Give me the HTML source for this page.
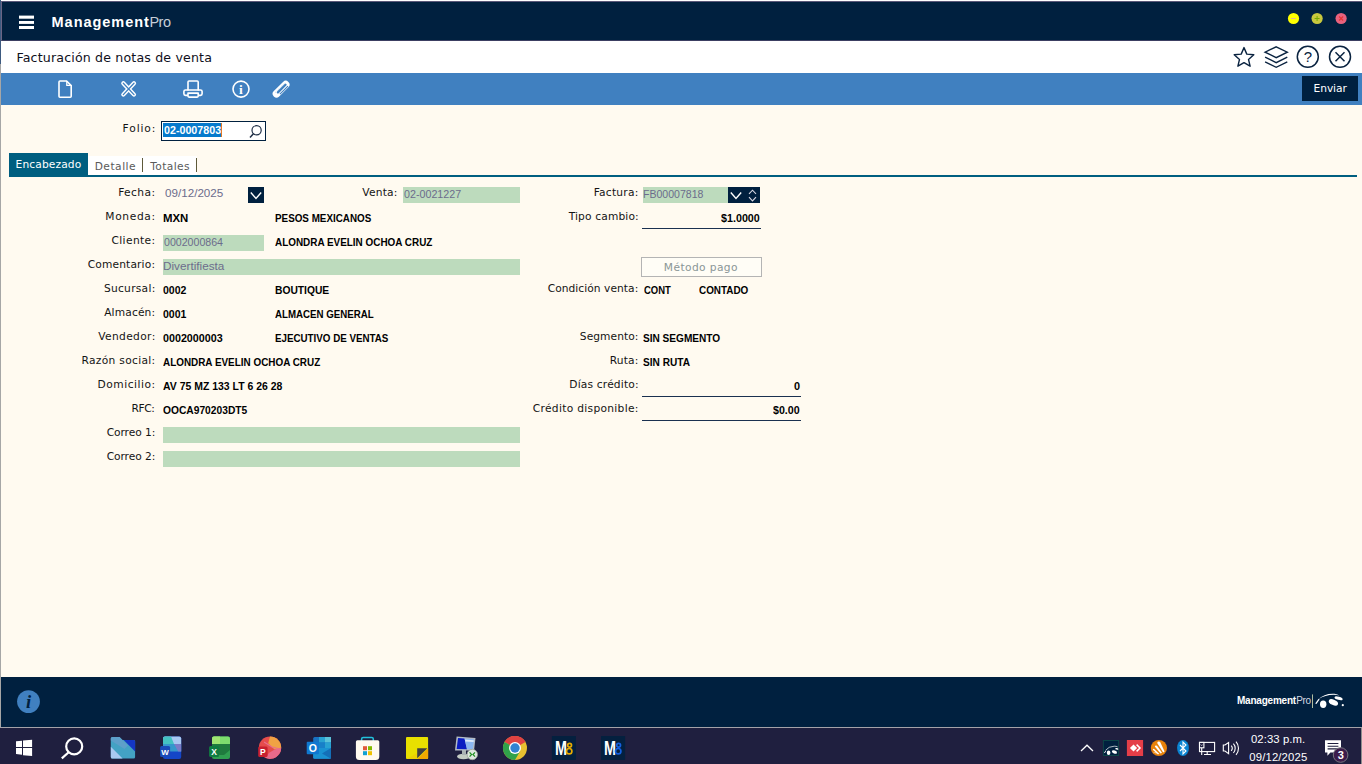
<!DOCTYPE html>
<html lang="es">
<head>
<meta charset="utf-8">
<title>ManagementPro - Facturación de notas de venta</title>
<style>
html,body{margin:0;padding:0}
body{width:1362px;height:764px;overflow:hidden;position:relative;background:#fffaf0;font-family:"Liberation Sans",sans-serif}
.abs,.t,svg.ov{position:absolute}
.t{white-space:pre;line-height:1;display:block;transform-origin:0 50%}
.lbl{font:10.67px/1 "DejaVu Sans",sans-serif;color:#141414}
.val{font:bold 10.9px/1 "Liberation Sans",sans-serif;color:#000}
.fld{font:10.9px/1 "Liberation Sans",sans-serif;color:#6c6c8c}
.brandb{font:bold 14.5px/1 "Liberation Sans",sans-serif;color:#fff}
.brandl{font:14.5px/1 "Liberation Sans",sans-serif;color:#c6ced8}
.title{font:12.6px/1 "DejaVu Sans",sans-serif;color:#10101c}
.btn{font:10.67px/1 "DejaVu Sans",sans-serif;color:#fff}
.sel{font:bold 10.9px/1 "Liberation Sans",sans-serif;color:#fff}
.tabon{font:10.67px/1 "DejaVu Sans",sans-serif;color:#fff}
.tab{font:10.67px/1 "DejaVu Sans",sans-serif;color:#5a5a5a}
.mp{font:10.67px/1 "DejaVu Sans",sans-serif;color:#8a9696}
.clock{font:11.3px/1 "Liberation Sans",sans-serif;color:#fff}
.footb{font:bold 10px/1 "Liberation Sans",sans-serif;color:#fff}
.footl{font:10px/1 "Liberation Sans",sans-serif;color:#d4dbe3}
#edge0{left:0;top:0;width:1px;height:64px;background:#3d5a80}
#edge1{left:0;top:64px;width:1px;height:664px;background:#a6a6a6}
#topline{left:1px;top:0;width:1361px;height:1px;background:#fff}
#header{left:1px;top:1px;width:1361px;height:40px;background:#00203f;box-sizing:border-box;border-left:1px solid #6b6585;border-top:1px solid #5a5878;border-bottom:1px solid #3c3f62}
#titlebar{left:1px;top:41px;width:1361px;height:32px;background:#fff}
#toolbar{left:1px;top:73px;width:1361px;height:32px;background:#4080c0}
#send{left:1302px;top:76px;width:56px;height:25px;background:#00203f}
#content{left:1px;top:105px;width:1361px;height:572px;background:#fffaf0}
#folio{left:161px;top:121px;width:105px;height:20px;box-sizing:border-box;border:1px solid #00203f;background:#fff}
#folsel{left:163px;top:123px;width:58px;height:14px;background:#067acc}
#caret{left:221px;top:123px;width:1px;height:14px;background:#e07828}
#tabwhite{left:88px;top:156px;width:109px;height:19px;background:#fff}
#tabon{left:9px;top:153px;width:79px;height:24px;background:#005e80}
#tabline{left:9px;top:175px;width:1348px;height:2px;background:#005e80}
.sep{width:1px;height:14px;top:158px;background:#5e5a3a}
.gf{background:#bddbbd;height:16px}
.nb{background:#00203f;height:16px}
.ul{height:1px;background:#1a3050}
#mpago{left:641px;top:257px;width:121px;height:20px;box-sizing:border-box;border:1px solid #b4b4b4;background:#fffdf6}
#footer{left:1px;top:677px;width:1361px;height:50px;background:#00203f}
#footline{left:0;top:727px;width:1362px;height:1px;background:#a4a2a8}
#taskbar{left:0;top:728px;width:1362px;height:36px;background:#1f1f3f}
#showdesk{left:1361px;top:728px;width:1px;height:36px;background:#8e8e8e}

</style>
</head>
<body>
<div class="abs" id="edge0"></div><div class="abs" id="edge1"></div><div class="abs" id="topline"></div>
<header class="abs" id="header"></header>
<div class="abs" id="titlebar"></div>
<nav class="abs" id="toolbar"></nav>
<div class="abs" id="send"></div>
<main class="abs" id="content"></main>
<div class="abs" id="folio"></div><div class="abs" id="folsel"></div><div class="abs" id="caret"></div>
<div class="abs" id="tabwhite"></div><div class="abs" id="tabline"></div><div class="abs" id="tabon"></div>
<div class="abs sep" style="left:142px"></div><div class="abs sep" style="left:196px"></div>
<!-- fields -->
<div class="abs nb" style="left:248px;top:187px;width:16px"></div>
<div class="abs gf" style="left:403px;top:187px;width:117px"></div>
<div class="abs gf" style="left:643px;top:187px;width:85px"></div>
<div class="abs nb" style="left:728px;top:187px;width:32px"></div>
<div class="abs gf" style="left:163px;top:235px;width:101px"></div>
<div class="abs gf" style="left:163px;top:259px;width:357px"></div>
<div class="abs gf" style="left:163px;top:427px;width:357px"></div>
<div class="abs gf" style="left:163px;top:451px;width:357px"></div>
<div class="abs ul" style="left:642px;top:228px;width:119px"></div>
<div class="abs ul" style="left:642px;top:396px;width:159px"></div>
<div class="abs ul" style="left:642px;top:420px;width:159px"></div>
<div class="abs" id="mpago"></div>
<footer class="abs" id="footer"></footer>
<div class="abs" id="footline"></div>
<div class="abs" id="taskbar"></div><div class="abs" id="showdesk"></div>
<span class="t brandb" style="left:51.59px;top:15.00px;letter-spacing:0.954px">Management</span>
<span class="t brandl" style="left:149.47px;top:15.00px;letter-spacing:-0.516px">Pro</span>
<span class="t title" style="left:16.45px;top:52.00px;letter-spacing:0.164px">Facturación de notas de venta</span>
<span class="t btn" style="left:1313.56px;top:84.00px;letter-spacing:-0.077px">Enviar</span>
<span class="t lbl" style="left:122.56px;top:124.00px;letter-spacing:0.906px">Folio:</span>
<span class="t sel" style="left:163.60px;top:125.00px;transform:scaleX(0.9825)">02-0007803</span>
<span class="t tabon" style="left:15.56px;top:160.00px;letter-spacing:0.118px">Encabezado</span>
<span class="t tab" style="left:94.66px;top:162.00px;letter-spacing:0.505px">Detalle</span>
<span class="t tab" style="left:150.29px;top:162.00px;letter-spacing:0.385px">Totales</span>
<span class="t lbl" style="left:118.16px;top:188.00px;letter-spacing:0.409px">Fecha:</span>
<span class="t lbl" style="left:105.36px;top:212.00px;letter-spacing:0.641px">Moneda:</span>
<span class="t lbl" style="left:111.47px;top:236.00px;letter-spacing:0.377px">Cliente:</span>
<span class="t lbl" style="left:87.67px;top:260.00px;letter-spacing:0.153px">Comentario:</span>
<span class="t lbl" style="left:103.95px;top:284.00px;letter-spacing:0.269px">Sucursal:</span>
<span class="t lbl" style="left:104.20px;top:308.00px;letter-spacing:0.143px">Almacén:</span>
<span class="t lbl" style="left:98.20px;top:332.00px;letter-spacing:0.363px">Vendedor:</span>
<span class="t lbl" style="left:81.46px;top:356.00px;letter-spacing:0.312px">Razón social:</span>
<span class="t lbl" style="left:97.46px;top:380.00px;letter-spacing:0.527px">Domicilio:</span>
<span class="t lbl" style="left:131.56px;top:404.00px;letter-spacing:-0.4px">RFC:</span>
<span class="t lbl" style="left:106.67px;top:428.00px;letter-spacing:-0.07px">Correo 1:</span>
<span class="t lbl" style="left:106.67px;top:452.00px;letter-spacing:-0.07px">Correo 2:</span>
<span class="t lbl" style="left:362.30px;top:188.00px;letter-spacing:0.201px">Venta:</span>
<span class="t lbl" style="left:593.66px;top:188.00px;letter-spacing:0.236px">Factura:</span>
<span class="t lbl" style="left:568.69px;top:212.00px;letter-spacing:0.146px">Tipo cambio:</span>
<span class="t lbl" style="left:547.67px;top:284.00px;letter-spacing:0.049px">Condición venta:</span>
<span class="t lbl" style="left:579.85px;top:332.00px;letter-spacing:0.057px">Segmento:</span>
<span class="t lbl" style="left:609.66px;top:356.00px;letter-spacing:0.162px">Ruta:</span>
<span class="t lbl" style="left:569.36px;top:380.00px;letter-spacing:0.162px">Días crédito:</span>
<span class="t lbl" style="left:532.77px;top:404.00px;letter-spacing:0.308px">Crédito disponible:</span>
<span class="t fld" style="left:165.16px;top:188.00px;transform:scaleX(1.0695)">09/12/2025</span>
<span class="t fld" style="left:403.79px;top:189.00px;transform:scaleX(0.9837)">02-0021227</span>
<span class="t fld" style="left:643.33px;top:189.00px;transform:scaleX(0.9680)">FB00007818</span>
<span class="t fld" style="left:163.79px;top:237.00px;transform:scaleX(0.9744)">0002000864</span>
<span class="t fld" style="left:163.19px;top:261.00px;transform:scaleX(1.0779)">Divertifiesta</span>
<span class="t val" style="left:162.65px;top:213.00px;transform:scaleX(1.0463)">MXN</span>
<span class="t val" style="left:274.70px;top:213.00px;transform:scaleX(0.9038)">PESOS MEXICANOS</span>
<span class="t val" style="left:275.34px;top:237.00px;transform:scaleX(0.9106)">ALONDRA EVELIN OCHOA CRUZ</span>
<span class="t val" style="left:163.40px;top:285.00px;transform:scaleX(0.9679)">0002</span>
<span class="t val" style="left:274.66px;top:285.00px;transform:scaleX(0.9429)">BOUTIQUE</span>
<span class="t val" style="left:163.40px;top:309.00px;transform:scaleX(0.9666)">0001</span>
<span class="t val" style="left:275.34px;top:309.00px;transform:scaleX(0.8919)">ALMACEN GENERAL</span>
<span class="t val" style="left:163.40px;top:333.00px;transform:scaleX(0.9851)">0002000003</span>
<span class="t val" style="left:274.70px;top:333.00px;transform:scaleX(0.8980)">EJECUTIVO DE VENTAS</span>
<span class="t val" style="left:163.44px;top:357.00px;transform:scaleX(0.9094)">ALONDRA EVELIN OCHOA CRUZ</span>
<span class="t val" style="left:163.42px;top:381.00px;transform:scaleX(0.9604)">AV 75 MZ 133 LT 6 26 28</span>
<span class="t val" style="left:163.40px;top:405.00px;transform:scaleX(0.9402)">OOCA970203DT5</span>
<span class="t val" style="left:721.04px;top:213.00px;transform:scaleX(0.9849)">$1.0000</span>
<span class="t mp" style="left:663.86px;top:263.00px;letter-spacing:0.394px">Método pago</span>
<span class="t val" style="left:643.73px;top:285.00px;transform:scaleX(0.8688)">CONT</span>
<span class="t val" style="left:699.31px;top:285.00px;transform:scaleX(0.9087)">CONTADO</span>
<span class="t val" style="left:643.39px;top:333.00px;transform:scaleX(0.9265)">SIN SEGMENTO</span>
<span class="t val" style="left:643.39px;top:357.00px;transform:scaleX(0.9282)">SIN RUTA</span>
<span class="t val" style="left:794.09px;top:381.00px;letter-spacing:0px">0</span>
<span class="t val" style="left:773.24px;top:405.00px;transform:scaleX(0.9782)">$0.00</span>
<span class="t clock" style="left:1250.96px;top:734.00px;letter-spacing:0.088px">02:33 p.m.</span>
<span class="t clock" style="left:1249.26px;top:752.00px;letter-spacing:0.161px">09/12/2025</span>
<span class="t footb" style="left:1236.95px;top:696.00px;letter-spacing:-0.215px">Management</span>
<span class="t footl" style="left:1296.20px;top:696.00px;letter-spacing:-0.37px">Pro</span>
<svg class="ov" style="left:0;top:0" font-family="Liberation Sans, sans-serif" width="1362" height="764" viewBox="0 0 1362 764">
<!-- hamburger -->
<g fill="#fff"><rect x="19" y="15.6" width="15" height="3.1"/><rect x="19" y="21" width="15" height="2.9"/><rect x="19" y="26" width="15" height="3"/></g>
<!-- window buttons -->
<circle cx="1293.5" cy="18.5" r="5.6" fill="#ffff00"/><rect x="1291" y="18" width="5" height="1" fill="#e8b48c"/>
<circle cx="1317.1" cy="18.5" r="5.6" fill="#c8c83e"/><path d="M1314.6 18.5h5M1317.1 16v5" stroke="#78a800" stroke-width="1"/>
<circle cx="1341.1" cy="18.5" r="5.6" fill="#e8627e"/><path d="M1339.1 16.5l4 4M1343.1 16.5l-4 4" stroke="#e83434" stroke-width="1.2"/>
<!-- title bar icons -->
<g fill="none" stroke="#0a2340" stroke-width="1.5" stroke-linejoin="miter">
<path id="star" d="M1244.0 47.6 L1246.8 54.1 L1253.8 54.7 L1248.5 59.4 L1250.1 66.2 L1244.0 62.6 L1237.9 66.2 L1239.5 59.4 L1234.2 54.7 L1241.2 54.1 Z" stroke-linejoin="round" stroke-width="1.4"/>
<path d="M1276.2 46.8 L1287.3 52.2 L1276.2 57.6 L1265.1 52.2 Z" stroke-width="1.4"/>
<path d="M1265.1 57.2 L1276.2 62.6 L1287.3 57.2 M1265.1 61.9 L1276.2 67.3 L1287.3 61.9" stroke-width="1.4"/>
<circle cx="1307.8" cy="56.8" r="10.5"/>
<circle cx="1340" cy="56.8" r="10.5"/>
<path d="M1335.5 52.3 L1344.5 61.3 M1344.5 52.3 L1335.5 61.3"/>
</g>
<text x="1307.9" y="62.3" font-size="15" text-anchor="middle" fill="#0a2340">?</text>
<!-- toolbar icons -->
<g fill="none" stroke="#fff" stroke-width="1.6" stroke-linejoin="round" stroke-linecap="round">
<path d="M60 81 h6.6 l4.6 4.6 v10.6 a1 1 0 0 1 -1 1 h-10.2 a1 1 0 0 1 -1 -1 v-14.2 a1 1 0 0 1 1 -1 z"/>
<path d="M66.8 81.4 v4 h4" stroke-width="1.3"/>
<path d="M123.3 83.3 L134 94.6 M134 83.3 L123.3 94.6" stroke-width="4.2"/>
<path d="M123.3 83.3 L134 94.6 M134 83.3 L123.3 94.6" stroke="#4080c0" stroke-width="1.3"/>
<path d="M188 90 v-8 a1 1 0 0 1 1 -1 h8.2 a1 1 0 0 1 1 1 v8"/>
<rect x="183.9" y="90" width="18.2" height="5.4" rx="1.6"/>
<path d="M188 93.1 h10.2 v3 a1 1 0 0 1 -1 1 h-8.2 a1 1 0 0 1 -1 -1 z" fill="#4080c0"/>
<circle cx="241" cy="89.1" r="8" stroke-width="1.6"/>
</g>
<text x="241" y="93.6" font-size="13.5" font-weight="bold" text-anchor="middle" fill="#fff" font-family="Liberation Serif, serif">i</text>
<!-- paperclip -->
<g fill="none" stroke-linecap="round">
<path d="M276.5 93.8 L285.7 84.6" stroke="#fff" stroke-width="7.6"/>
<path d="M277.9 92.4 L285.5 84.8" stroke="#4080c0" stroke-width="2.3"/>
<path d="M279.9 94.2 L288 86.1" stroke="#4080c0" stroke-width="1.15" stroke-linecap="butt"/>
<path d="M275.2 92.6 L284.4 83.4" stroke="#4080c0" stroke-width="0.5" stroke-dasharray="1 1" stroke-linecap="butt" opacity=".7"/>
</g>
<!-- search in folio -->
<g fill="none" stroke="#1c2c44" stroke-width="1.2"><circle cx="256.6" cy="130.3" r="4.6"/><path d="M253.4 133.8 L250 137.4" stroke-width="1.5"/></g>
<!-- dropdown chevrons -->
<g fill="none" stroke="#fff" stroke-width="1.4">
<path d="M250.8 192.5 L256 198.5 L261.2 192.5"/>
<path d="M730.8 192.5 L736 198.5 L741.2 192.5"/>
<path d="M749 193.8 L752.5 190.2 L756 193.8 M749 197.2 L752.5 200.9 L756 197.2" stroke="#d8d8e4" stroke-width="1.1"/>
</g>
<!-- footer info -->
<circle cx="28.5" cy="701.6" r="11.4" fill="#4080c0"/>
<text x="28.5" y="707.6" font-size="18.5" font-weight="bold" font-style="italic" text-anchor="middle" fill="#00203f" font-family="Liberation Serif, serif">i</text>
<!-- ===== taskbar ===== -->
<!-- windows start -->
<g fill="#fff"><path d="M16 741.3 L22 740.8 V747 H16 Z"/><path d="M23 740.6 L32.1 739.8 V747 H23 Z"/><path d="M16 748 H22 V754.8 L16 754.1 Z"/><path d="M23 748 H32.1 V756.1 L23 755.3 Z"/></g>
<!-- search -->
<g fill="none" stroke="#fff" stroke-width="2.2"><circle cx="74.2" cy="746.4" r="8"/><path d="M68.7 752.2 L61.8 758.4" stroke-linecap="butt"/></g>
<!-- explorer -->
<g>
<path d="M112.3 737 h7.2 l3 3 h11.1 a1.5 1.5 0 0 1 1.5 1.5 v15.6 a1.5 1.5 0 0 1 -1.5 1.5 h-21.3 a1.5 1.5 0 0 1 -1.5 -1.5 v-18.6 a1.5 1.5 0 0 1 1.5 -1.5 z" fill="#43a2c4"/>
<path d="M110.8 738.5 a1.5 1.5 0 0 1 1.5 -1.5 h7.2 l8.5 8.5 l-3.5 3.5 l-13.7 -8.6 z" fill="#5d9fca"/>
<path d="M110.8 746.8 L122.6 758.6 H112.3 a1.5 1.5 0 0 1 -1.5 -1.5 Z" fill="#a9c9f1"/>
<path d="M123.6 740 H133.6 a1.5 1.5 0 0 1 1.5 1.5 V751.6 Z" fill="#1436c6"/>
</g>
<!-- word -->
<g>
<rect x="163" y="736.4" width="18.2" height="22.6" rx="2" fill="#1446c8"/>
<path d="M165 736.4 h14.2 a2 2 0 0 1 2 2 v5.6 h-18.2 v-5.6 a2 2 0 0 1 2 -2 z" fill="#a8c8f2"/>
<path d="M165 736.4 h6 l3 7.6 h-11 v-5.6 a2 2 0 0 1 2 -2 z" fill="#44c2c2"/>
<rect x="163" y="744" width="18.2" height="7.5" fill="#3598cc"/>
<path d="M174 744 h7.2 v7.5 h-3 z" fill="#7a7cc8"/>
<rect x="160.1" y="746" width="10" height="11" rx="1.5" fill="#1a4ab8"/>
<text x="165.1" y="754.6" font-size="8" font-weight="bold" fill="#fff" text-anchor="middle">W</text>
</g>
<!-- excel -->
<g>
<rect x="212" y="736.4" width="18" height="22.6" rx="2" fill="#2f9e50"/>
<path d="M214 736.4 h14 a2 2 0 0 1 2 2 v5.6 h-18 v-5.6 a2 2 0 0 1 2 -2 z" fill="#7ddc6e"/>
<path d="M214 736.4 h6 v7.6 h-8 v-5.6 a2 2 0 0 1 2 -2 z" fill="#a0e472"/>
<path d="M212 744 h18 v6 l-6 5 h-12 z" fill="#1f7a3e"/>
<rect x="209.1" y="746" width="10" height="11" rx="1.5" fill="#107c41"/>
<text x="214.1" y="754.6" font-size="8.5" font-weight="bold" fill="#fff" text-anchor="middle">X</text>
</g>
<!-- powerpoint -->
<g>
<circle cx="270" cy="747.7" r="11.2" fill="#e64c4c"/>
<path d="M270 736.5 a11.2 11.2 0 0 1 11.2 11.2 l-7 1.5 l-6 -6 z" fill="#f0a244"/>
<path d="M281.2 747.7 a11.2 11.2 0 0 1 -16 10.1 l4 -5 l6 -3.5 z" fill="#e86a8a"/>
<path d="M264 742 l8 5 l8 2" fill="none" stroke="#e8708c" stroke-width="1.2"/>
<rect x="258.2" y="746.4" width="9.4" height="10.6" rx="1.5" fill="#c8202f"/>
<text x="262.9" y="754.8" font-size="8.5" font-weight="bold" fill="#fff" text-anchor="middle">P</text>
</g>
<!-- outlook -->
<g>
<rect x="313.2" y="737" width="17.8" height="21.8" rx="1.5" fill="#1872c2"/>
<rect x="319" y="737" width="6" height="5.5" fill="#28a2d2"/><rect x="325" y="737" width="6" height="5.5" fill="#5ac2d8"/>
<rect x="319" y="742.5" width="6" height="5.5" fill="#1880c8"/><rect x="325" y="742.5" width="6" height="5.5" fill="#28a2d2"/>
<path d="M313.2 748 L331 748 V757.3 a1.5 1.5 0 0 1 -1.5 1.5 H314.7 a1.5 1.5 0 0 1 -1.5 -1.5 Z" fill="#1a92d2"/>
<path d="M331 748 L322 753.5 L331 758.8 Z" fill="#1470b8"/>
<rect x="306.7" y="741.8" width="12.2" height="12.4" rx="1" fill="#0f78d0"/>
<text x="312.8" y="752" font-size="10.5" font-weight="bold" fill="#fff" text-anchor="middle">O</text>
</g>
<!-- store -->
<g>
<path d="M361.6 742.5 V739 a1.6 1.6 0 0 1 1.6 -1.6 H371.7 a1.6 1.6 0 0 1 1.6 1.6 V742.5" fill="none" stroke="#22c2dc" stroke-width="1.5"/>
<path d="M357.4 740.3 H377.8 a1.5 1.5 0 0 1 1.5 1.5 V756.5 a3.5 3.5 0 0 1 -3.5 3.5 H359.4 a3.5 3.5 0 0 1 -3.5 -3.5 V741.8 a1.5 1.5 0 0 1 1.5 -1.5 Z" fill="#fffaf0"/>
<rect x="363" y="746.2" width="4" height="4" fill="#e05a3a"/><rect x="368" y="746.2" width="4" height="4" fill="#82ba00"/>
<rect x="363" y="751.2" width="4" height="4" fill="#12a2d2"/><rect x="368" y="751.2" width="4" height="4" fill="#f0c200"/>
</g>
<!-- sticky notes -->
<g>
<rect x="406" y="737" width="22.1" height="22" rx="1" fill="#e8e000"/>
<path d="M417.2 748.3 H427.4 L417.2 758.3 Z" fill="#404040"/>
<path d="M428.1 748.3 V758 a1 1 0 0 1 -1 1 H417.4 Z" fill="#f0a800"/>
<path d="M406.5 759 L417 753 V759 Z" fill="#ecc800" opacity=".6"/>
</g>
<!-- remote desktop -->
<g>
<ellipse cx="463.5" cy="756.5" rx="6.5" ry="2.8" fill="#c4ccc4"/>
<path d="M462 750 h4 v5 h-4 z" fill="#aab2b4"/>
<path d="M456.6 736.4 L475.5 738 L474 750.6 L455 750.4 Z" fill="#b4bcc6"/>
<path d="M458 738 L464.5 738.4 L467 749.2 L456.6 749 Z" fill="#0a1cc2"/>
<path d="M464.5 738.4 L474 739.2 L472.8 749.4 L467 749.2 Z" fill="#8cb6f0"/>
<path d="M465 739.5 L473.8 740.2 L473.6 742 L465.4 741.4 Z" fill="#dfeaf8"/>
<circle cx="472.3" cy="754.5" r="5.2" fill="#dfe7df" stroke="#9aa29a" stroke-width=".8"/>
<path d="M469.6 752.3 l2 2.2 l-2 2.2 M475 752.3 l-2 2.2 l2 2.2" fill="none" stroke="#1f8f1f" stroke-width="1.2"/>
</g>
<!-- chrome -->
<g>
<circle cx="515" cy="748" r="12" fill="#e8c030"/>
<path d="M515 748 L504.6 742 A12 12 0 0 1 525.4 742 Z" fill="#e04242"/>
<path d="M504.6 742 A12 12 0 0 1 525.4 742 L515 742 Z" fill="#e04242"/>
<path d="M515 748 L504.6 742 A12 12 0 0 0 515 760 Z" fill="#30a24a"/>
<path d="M515 760 L520.2 751 L515 748 Z" fill="#30a24a"/>
<circle cx="515" cy="748" r="6" fill="#fff"/><circle cx="515" cy="748" r="4.7" fill="#3282d2"/>
</g>
<!-- M icons -->
<g>
<rect x="551.9" y="736" width="24" height="23.9" fill="#04203f"/>
<text x="555" y="755.1" font-size="19.8" font-weight="bold" fill="#fff" textLength="12" lengthAdjust="spacingAndGlyphs">M</text>
<g fill="none" stroke="#e8aa00" stroke-width="1.7"><circle cx="569.6" cy="745.3" r="1.9"/><circle cx="569.2" cy="751.2" r="2.7"/></g>
<rect x="601" y="736" width="24.1" height="23.9" fill="#04203f"/>
<text x="604.1" y="755.1" font-size="19.8" font-weight="bold" fill="#fff" textLength="12" lengthAdjust="spacingAndGlyphs">M</text>
<g fill="none" stroke="#1460e0" stroke-width="1.7"><circle cx="618.6" cy="745.3" r="1.9"/><circle cx="618.2" cy="751.2" r="2.7"/></g>
</g>
<!-- ===== tray ===== -->
<path d="M1081 751 L1087 745.2 L1093 751" fill="none" stroke="#fff" stroke-width="1.3"/>
<!-- MP tray -->
<g>
<rect x="1103.4" y="740.5" width="15.2" height="15" fill="#00203f" stroke="#0c4446" stroke-width="1"/>
<path d="M1105.6 750.2 Q1108.6 746.4 1114.2 746.2 Q1116.2 746.2 1117.6 746.8" fill="none" stroke="#fff" stroke-width=".8" opacity=".85"/>
<ellipse cx="1108.6" cy="752.8" rx="1.8" ry="2.3" fill="#fff"/>
<ellipse cx="1114.4" cy="752" rx="2.7" ry="1.6" transform="rotate(20 1114.4 752)" fill="#fff"/>
<ellipse cx="1116.8" cy="748.8" rx="1.6" ry=".8" transform="rotate(15 1116.8 748.8)" fill="#fff"/>
<path d="M1104.4 753 L1105.8 750.8" stroke="#fff" stroke-width=".9"/>
</g>
<!-- anydesk -->
<rect x="1126.9" y="740" width="16.2" height="16" fill="#e43e48"/>
<path d="M1133.5 744.4 L1137.1 748 L1133.5 751.6 L1129.9 748 Z" fill="#fff"/>
<path d="M1136.6 744.6 L1140 748 L1136.6 751.4" fill="none" stroke="#fff" stroke-width="1.5"/>
<!-- avast -->
<circle cx="1158.9" cy="748" r="8.1" fill="#e8820a"/>
<g fill="#fff">
<path d="M1157.2 743 a1.7 1.7 0 0 1 3.1 -.8 L1164.6 751.4 L1163.2 752.4 Z"/>
<path d="M1154.8 746.6 a1.3 1.3 0 0 1 2.2 -.8 L1162 752.8 L1160.6 753.6 Z"/>
<path d="M1152.8 749.8 a1 1 0 0 1 1.6 -.6 L1159.2 753.8 L1158 754.4 Z"/>
<path d="M1152.4 752.2 L1156.8 752.6 L1156.6 753.4 Z" opacity=".8"/>
</g>
<!-- bluetooth -->
<ellipse cx="1183" cy="748" rx="5.9" ry="8" fill="#0a84d2"/>
<path d="M1180 745 L1186 751 L1183 754 V742 L1186 745 L1180 751" fill="none" stroke="#fff" stroke-width="1.1" stroke-linejoin="miter"/>
<!-- network -->
<g fill="none" stroke="#fff" stroke-width="1.1">
<rect x="1199.5" y="742.4" width="15.1" height="9.2"/>
<path d="M1207.2 751.6 V754.5 M1204 754.5 H1211"/>
<rect x="1199.5" y="742.4" width="4.4" height="5.4" fill="#1f1f3f"/>
<path d="M1201.7 747.8 V755"/>
<path d="M1200.8 744.6 l.9 .9 l.9 -.9" stroke-width=".8"/>
</g>
<!-- speaker -->
<g fill="none" stroke="#fff" stroke-width="1.1">
<path d="M1223.3 745 H1225 L1228.6 742.6 V753.6 L1225 751 H1223.3 Z"/>
<path d="M1231.2 745.6 A4 4 0 0 1 1231.2 750.8"/>
<path d="M1233.4 743.6 A6.8 6.8 0 0 1 1233.4 752.8"/>
<path d="M1236 741.6 A10 10 0 0 1 1236 754.8"/>
</g>
<!-- notifications -->
<path d="M1325 740.2 H1341 V752.6 H1330.4 L1327.4 755.8 V752.6 H1325 Z" fill="#fff"/>
<path d="M1327.6 743.5 H1338.4 M1327.6 746.2 H1338.4 M1327.6 748.9 H1338.4" stroke="#1f1f3f" stroke-width="1.1"/>
<circle cx="1340.6" cy="755" r="7.3" fill="#3c1c4c" stroke="#77777f" stroke-width="1"/>
<text x="1340.7" y="759" font-size="11" font-weight="bold" fill="#fff" text-anchor="middle">3</text>
<!-- footer logo -->
<rect x="1312" y="694.4" width="1" height="13.6" fill="#aebca0"/>
<g fill="#fff">
<path d="M1318.2 699.4 Q1324.5 693.2 1334.4 693.8 Q1337.6 694.2 1339.6 695.6 Q1336.6 694.8 1333.6 694.8 Q1325.2 694.8 1318.2 699.4 Z"/>
<ellipse cx="1323.2" cy="704.3" rx="3.2" ry="3.7"/>
<ellipse cx="1333.4" cy="702.4" rx="4.9" ry="2.7" transform="rotate(24 1333.4 702.4)"/>
<ellipse cx="1338.6" cy="698.3" rx="4.2" ry="1.6" transform="rotate(16 1338.6 698.3)"/>
<path d="M1315.2 703.6 L1318.6 698.8 L1319.6 699.5 L1316.4 704 Z"/>
<circle cx="1342.8" cy="705.2" r="1.1"/>
</g>

</svg>
</body>
</html>
